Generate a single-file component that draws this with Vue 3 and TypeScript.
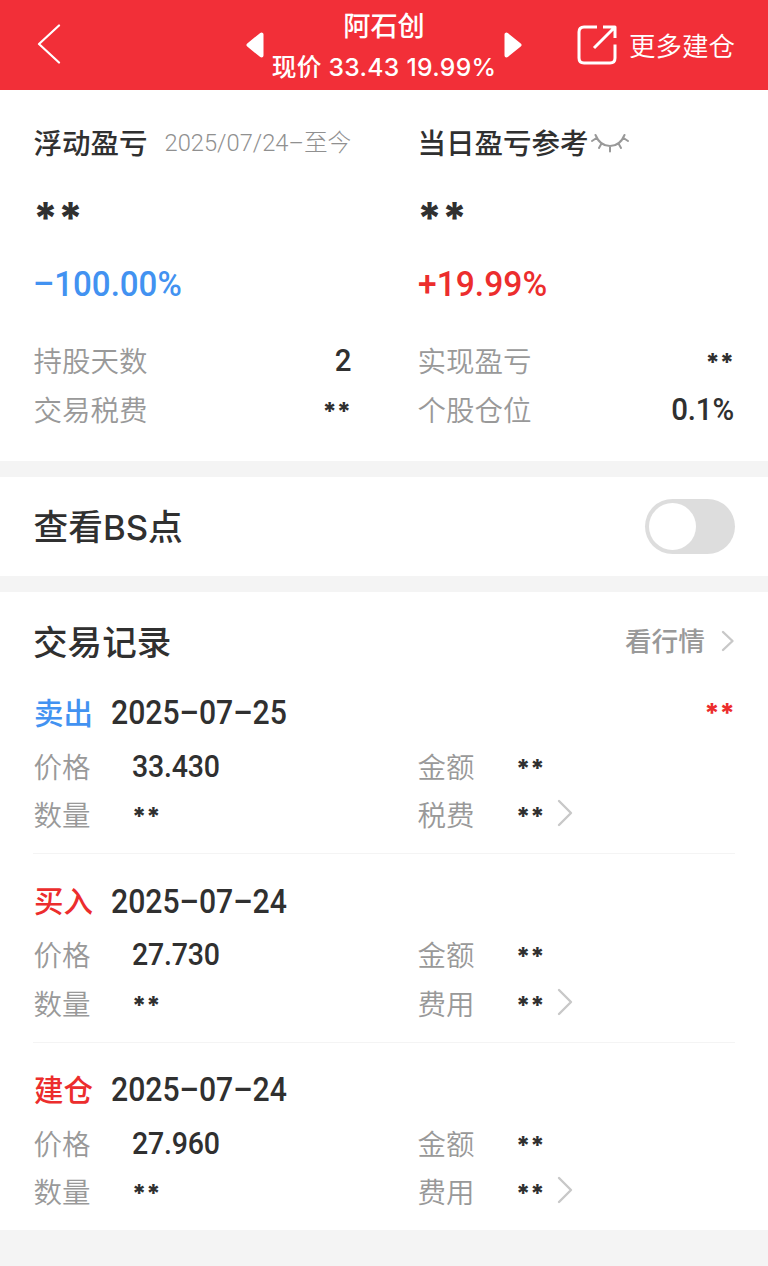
<script setup lang="ts">
import { ref } from 'vue'

interface Stat { label: string; value: string }
interface Column { title: string; range?: string; hidden: string; percent: string; tone: string; stats: Stat[] }
interface Trade { action: string; tone: string; date: string; profit?: string; price: string; fee: string }

const MASK = '**'
const showPoints = ref(false)

const columns: Column[] = [
  {
    title: '浮动盈亏', range: '2025/07/24–至今', hidden: MASK, percent: '–100.00%', tone: 'blue',
    stats: [{ label: '持股天数', value: '2' }, { label: '交易税费', value: MASK }],
  },
  {
    title: '当日盈亏参考', hidden: MASK, percent: '+19.99%', tone: 'red',
    stats: [{ label: '实现盈亏', value: MASK }, { label: '个股仓位', value: '0.1%' }],
  },
]

const trades: Trade[] = [
  { action: '卖出', tone: 'blue', date: '2025–07–25', profit: MASK, price: '33.430', fee: '税费' },
  { action: '买入', tone: 'red', date: '2025–07–24', price: '27.730', fee: '费用' },
  { action: '建仓', tone: 'red', date: '2025–07–24', price: '27.960', fee: '费用' },
]
</script>

<template>
  <div class="page">
    <header class="bar">
      <svg class="back" width="24" height="40" viewBox="0 0 24 40"><path d="M22 1.500 2 20 22 38.500" /></svg>
      <div class="switcher">
        <svg class="tri" width="18" height="26" viewBox="0 0 18 26"><path d="M15.5 2.5v21L2.5 13z" /></svg>
        <div class="stock">
          <div class="name">阿石创</div>
          <div class="quote">现价 33.43 19.99%</div>
        </div>
        <svg class="tri" width="18" height="26" viewBox="0 0 18 26"><path d="M2.5 2.5v21l13-10.5z" /></svg>
      </div>
      <div class="more">
        <svg class="share" width="40" height="40" viewBox="0 0 40 40">
          <path d="M20 2H7Q2 2 2 7V33Q2 38 7 38H33Q38 38 38 33V19.500M26 2H38V13M37.500 2.500 17 23" />
        </svg>
        <span>更多建仓</span>
      </div>
    </header>

    <section class="summary">
      <div v-for="c in columns" :key="c.title" class="col">
        <div class="title">
          <span class="caption">{{ c.title }}</span>
          <span v-if="c.range" class="range">{{ c.range }}</span>
          <svg v-else class="eye" width="38" height="20" viewBox="0 0 38 20">
            <path d="M4.500 2Q9 13 19 13T33.500 2M5.500 5 1 8M32.500 5l4.500 3M10.500 10.500 8 15M27.500 10.500 30 15M19 13v5.500" />
          </svg>
        </div>
        <div class="mask big">{{ c.hidden }}</div>
        <div class="percent" :class="c.tone">{{ c.percent }}</div>
        <div v-for="s in c.stats" :key="s.label" class="stat">
          <span class="label">{{ s.label }}</span>
          <span :class="s.value === MASK ? 'mask' : 'num'">{{ s.value }}</span>
        </div>
      </div>
    </section>

    <section class="points">
      <span class="caption">查看<span class="latin">BS</span>点</span>
      <button class="toggle" :class="{ on: showPoints }" @click="showPoints = !showPoints"><i /></button>
    </section>

    <section class="records">
      <div class="heading">
        <h2>交易记录</h2>
        <span class="link">看行情</span>
        <svg class="chev" width="14" height="22" viewBox="0 0 14 22"><path d="M2 2l9.500 9L2 20" /></svg>
      </div>
      <article v-for="t in trades" :key="t.action" class="trade">
        <div class="head">
          <span class="action" :class="t.tone">{{ t.action }}</span>
          <span class="date">{{ t.date }}</span>
          <span v-if="t.profit" class="mask profit">{{ t.profit }}</span>
        </div>
        <div class="line">
          <span class="label">价格</span><span class="num">{{ t.price }}</span>
          <span class="label">金额</span><span class="mask">{{ MASK }}</span>
        </div>
        <div class="line">
          <span class="label">数量</span><span class="mask">{{ MASK }}</span>
          <span class="label">{{ t.fee }}</span>
          <span class="fee">
            <span class="mask">{{ MASK }}</span>
            <svg class="chev" width="16" height="28" viewBox="0 0 16 28"><path d="M2 2l12 12L2 26" /></svg>
          </span>
        </div>
      </article>
    </section>
  </div>
</template>

<style>
html, body { background: #f4f4f4; }
</style>

<style scoped>
.page {
  width: 768px;
  height: 1266px;
  overflow: hidden;
  background: #f4f4f4;
  color: #303030;
  font-family: "Noto Sans CJK SC", sans-serif;
}
svg { flex: none; fill: none; stroke-linecap: round; stroke-linejoin: round; }
.bar {
  box-sizing: border-box;
  height: 90px;
  padding: 0 33px 0 37px;
  display: grid;
  grid-template-columns: 208px 278px 1fr;
  align-items: center;
  background: #f22f38;
  color: #fff;
}
.back { stroke: #fff; stroke-width: 2.2; margin-bottom: 2px; }
.switcher { display: flex; align-items: center; justify-content: space-between; padding: 0 1px; }
.tri { fill: #fff; stroke: #fff; stroke-width: 4; }
.stock { text-align: center; white-space: nowrap; }
.name { font-size: 27.2px; font-weight: 500; line-height: 44px; }
.quote { font: 500 24.7px/43px Inter, "Noto Sans CJK SC", sans-serif; letter-spacing: .3px; }
.more { display: flex; align-items: center; justify-content: flex-end; gap: 12px; font-size: 26.5px; font-weight: 350; white-space: nowrap; }
.more span { padding-bottom: 2px; }
.share { stroke: #fff; stroke-width: 3; stroke-linecap: butt; }
.summary {
  box-sizing: border-box;
  height: 371px;
  padding: 30px 34px 0;
  display: grid;
  grid-template-columns: 317px 316px;
  column-gap: 67px;
  background: #fff;
}
.title { display: flex; align-items: center; height: 46px; font-size: 28.5px; font-weight: 500; white-space: nowrap; }
.caption { margin-left: -.5px; padding-bottom: 3px; }
.range { margin-left: 17px; font: 300 23.7px/46px Roboto, "Noto Sans CJK SC", sans-serif; color: #909090; }
.eye { margin-left: 2px; stroke: #999; stroke-width: 2; }
.mask { font-family: Inter, sans-serif; font-weight: 800; font-size: 24.5px; line-height: 48px; }
.mask.big { font-size: 43px; height: 87px; line-height: 103px; margin-left: -1px; }
.percent { font: 500 35px/64px Roboto, sans-serif; height: 85px; margin-left: -1px; transform: scaleX(.945); transform-origin: left; }
.percent.red { transform: scaleX(.96); margin-left: 0; }
.blue { color: #4292f1; }
.red { color: #ec2d2d; }
.stat { display: flex; justify-content: space-between; align-items: center; height: 48.5px; }
.label { color: #999; font-size: 28.5px; font-weight: 350; line-height: 43px; padding-bottom: 5px; margin-left: -.5px; }
.num { font: 500 31px/46px Roboto, sans-serif; padding-bottom: 2px; letter-spacing: -.2px; transform: scaleX(.92); transform-origin: left; }
.stat .num { transform: scaleX(.95); transform-origin: right; }
.points {
  box-sizing: border-box;
  height: 99px;
  margin-top: 16px;
  padding: 0 33px 0 34px;
  display: flex;
  align-items: center;
  justify-content: space-between;
  background: #fff;
  font-size: 34.7px;
  font-weight: 500;
}
.latin { font-family: Inter, sans-serif; font-weight: 450; }
.toggle { box-sizing: border-box; width: 90px; height: 55px; padding: 4px; border: 0; border-radius: 28px; background: #ddd; display: flex; }
.toggle i { width: 47px; height: 47px; border-radius: 50%; background: #fff; }
.toggle.on { justify-content: flex-end; background: #f22f38; }
.records { box-sizing: border-box; height: 638px; margin-top: 16px; padding: 20px 33px 0; background: #fff; }
.heading { display: flex; align-items: center; height: 60px; }
h2 { margin: 0; flex: 1; padding-bottom: 5px; font-size: 34.6px; font-weight: 500; }
.link { font-size: 26.7px; color: #999; font-weight: 500; margin-right: 16px; padding-bottom: 5px; }
.heading .chev { margin-bottom: 2px; }
.chev { stroke: #c8c8c8; stroke-width: 2.4; }
.trade { box-sizing: border-box; height: 188.5px; padding: 14px 0 0 1px; border-bottom: 1.5px solid #f4f4f4; }
.trade:nth-of-type(n + 2) { padding-top: 20.5px; }
.trade:first-of-type { height: 182px; }
.trade:last-of-type { border: 0; }
.head { display: flex; align-items: center; height: 54px; margin-bottom: 3.5px; }
.action { width: 77px; font-size: 29.5px; font-weight: 500; padding-bottom: 5px; }
.date { font: 500 33px/54px Roboto, sans-serif; letter-spacing: 0; transform: scaleX(.914); transform-origin: left; }
.profit { margin-left: auto; color: #ec2d2d; font-size: 26.5px; }
.line { display: grid; grid-template-columns: 98px 286px 98px 1fr; align-items: center; height: 48.5px; }
.fee { display: flex; align-items: center; gap: 12px; }
.fee .chev { margin-bottom: 6px; }
</style>
